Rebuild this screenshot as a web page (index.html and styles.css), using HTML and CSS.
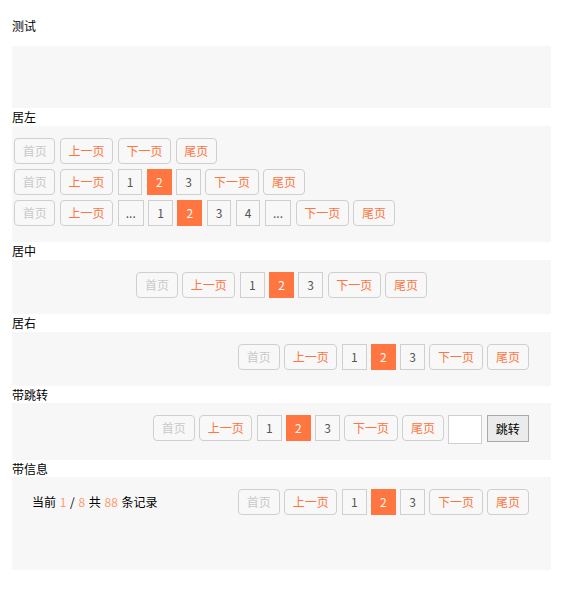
FILE: index.html
```html
<!DOCTYPE html>
<html lang="zh">
<head>
<meta charset="utf-8">
<title>分页</title>
<link rel="stylesheet" href="styles.css">
</head>
<body>
<div class="page">
  <div class="label title">测试</div>
  <div class="box box-empty"></div>

  <div class="label">居左</div>
  <div class="box box-left">
    <div class="pager">
      <span class="btn text disabled">首页</span>
      <span class="btn text">上一页</span>
      <span class="btn text">下一页</span>
      <span class="btn text">尾页</span>
    </div>
    <div class="pager">
      <span class="btn text disabled">首页</span>
      <span class="btn text">上一页</span>
      <span class="btn num">1</span>
      <span class="btn num active">2</span>
      <span class="btn num">3</span>
      <span class="btn text">下一页</span>
      <span class="btn text">尾页</span>
    </div>
    <div class="pager">
      <span class="btn text disabled">首页</span>
      <span class="btn text">上一页</span>
      <span class="btn num dots">...</span>
      <span class="btn num">1</span>
      <span class="btn num active">2</span>
      <span class="btn num">3</span>
      <span class="btn num">4</span>
      <span class="btn num dots">...</span>
      <span class="btn text">下一页</span>
      <span class="btn text">尾页</span>
    </div>
  </div>

  <div class="label">居中</div>
  <div class="box box-center">
    <div class="pager">
      <span class="btn text disabled">首页</span>
      <span class="btn text">上一页</span>
      <span class="btn num">1</span>
      <span class="btn num active">2</span>
      <span class="btn num">3</span>
      <span class="btn text">下一页</span>
      <span class="btn text">尾页</span>
    </div>
  </div>

  <div class="label">居右</div>
  <div class="box box-right">
    <div class="pager">
      <span class="btn text disabled">首页</span>
      <span class="btn text">上一页</span>
      <span class="btn num">1</span>
      <span class="btn num active">2</span>
      <span class="btn num">3</span>
      <span class="btn text">下一页</span>
      <span class="btn text">尾页</span>
    </div>
  </div>

  <div class="label">带跳转</div>
  <div class="box box-right">
    <div class="pager pager-top">
      <span class="btn text disabled">首页</span>
      <span class="btn text">上一页</span>
      <span class="btn num">1</span>
      <span class="btn num active">2</span>
      <span class="btn num">3</span>
      <span class="btn text">下一页</span>
      <span class="btn text">尾页</span>
      <input class="jump-input" type="text">
      <button class="jump-btn" type="button">跳转</button>
    </div>
  </div>

  <div class="label">带信息</div>
  <div class="box box-info">
    <div class="info">当前 <span class="hl">1</span> / <span class="hl">8</span> 共 <span class="hl">88</span> 条记录</div>
    <div class="pager">
      <span class="btn text disabled">首页</span>
      <span class="btn text">上一页</span>
      <span class="btn num">1</span>
      <span class="btn num active">2</span>
      <span class="btn num">3</span>
      <span class="btn text">下一页</span>
      <span class="btn text">尾页</span>
    </div>
  </div>
</div>
</body>
</html>
```

FILE: styles.css
```css
* {
  box-sizing: border-box;
}

html, body {
  margin: 0;
  padding: 0;
  background: #ffffff;
}

body {
  font-family: "Noto Sans CJK SC", "Noto Sans", sans-serif;
  font-size: 12px;
  color: #000;
}

.page {
  padding: 17px 10px 0 12px;
}

.label {
  height: 17.3px;
  line-height: 17px;
  font-size: 12px;
  color: #000;
}

.title {
  margin-bottom: 12px;
}

.box {
  background: #f7f7f7;
  padding: 12px 0 17px;
}

.box-empty {
  height: 62px;
  padding: 0;
}

.box-left {
  display: flex;
  flex-direction: column;
  gap: 5px;
  padding-left: 2px;
  padding-bottom: 16.7px;
}

.box-center {
  display: flex;
  justify-content: center;
  padding-bottom: 16.7px;
}

.box-right {
  display: flex;
  justify-content: flex-end;
  padding-right: 22.3px;
  padding-bottom: 16.3px;
}

.box-info {
  display: flex;
  justify-content: space-between;
  align-items: flex-start;
  padding-left: 20px;
  padding-right: 22.3px;
  min-height: 93px;
}

.pager {
  display: flex;
  align-items: center;
  gap: 4.5px;
}

.pager-top {
  align-items: flex-start;
}

.btn {
  display: inline-block;
  height: 26px;
  line-height: 24px;
  padding: 0 7.7px;
  border: 1px solid #cfcfcf;
  background: #f8f8f8;
  font-size: 12px;
  white-space: nowrap;
}

.text {
  border-radius: 4px;
  color: #ff7441;
}

.text.disabled {
  color: #c9c9c9;
}

.num {
  padding: 0 8px;
  color: #555;
}

.num.dots {
  padding: 0 7px;
}

.num.active {
  background: #ff7640;
  border-color: #ff7640;
  color: #fff;
}

.jump-input {
  width: 34px;
  height: 28.7px;
  margin: 0;
  padding: 0 4px;
  border: 1px solid #cfcfcf;
  background: #fff;
  font-family: inherit;
  font-size: 12px;
  outline: none;
}

.jump-btn {
  width: 42px;
  height: 27px;
  margin: 0;
  padding: 0;
  border: 1px solid #a9a9a9;
  background: #ebebeb;
  color: #000;
  font-family: inherit;
  font-size: 12px;
  line-height: 25px;
}

.info {
  height: 26px;
  line-height: 26px;
  font-size: 12px;
  color: #000;
  white-space: pre;
  word-spacing: 1px;
}

.hl {
  color: #ff9b70;
}
```
